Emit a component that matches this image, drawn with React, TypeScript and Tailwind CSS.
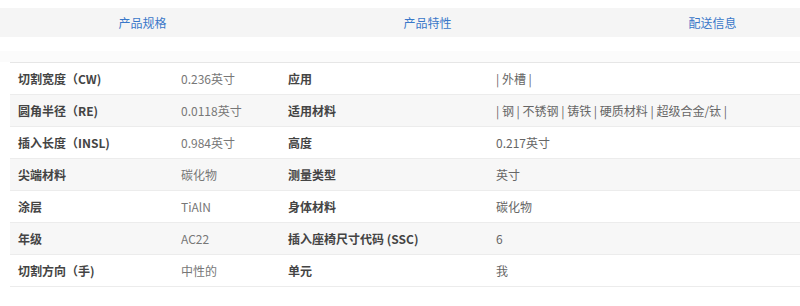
const tabs = ['产品规格', '产品特性', '配送信息'];

const rows: [string, string, string, string][] = [
  ['切割宽度（CW)', '0.236英寸', '应用', '| 外槽 |'],
  ['圆角半径（RE)', '0.0118英寸', '适用材料', '| 钢 | 不锈钢 | 铸铁 | 硬质材料 | 超级合金/钛 |'],
  ['插入长度（INSL)', '0.984英寸', '高度', '0.217英寸'],
  ['尖端材料', '碳化物', '测量类型', '英寸'],
  ['涂层', 'TiAlN', '身体材料', '碳化物'],
  ['年级', 'AC22', '插入座椅尺寸代码 (SSC)', '6'],
  ['切割方向（手)', '中性的', '单元', '我'],
];

export default function App() {
  return (
    <div
      className="w-[800px] h-[306px] overflow-hidden bg-white text-[12px]"
      style={{ fontFamily: '"Noto Sans CJK SC", "Open Sans", sans-serif' }}
    >
      <div className="pt-2">
        <div className="flex h-[29px] bg-[#f5f5f5] overflow-hidden">
          {tabs.map((t) => (
            <div
              key={t}
              className="w-[285px] shrink-0 flex items-center justify-center text-[#3a78c9]"
            >
              {t}
            </div>
          ))}
        </div>
      </div>

      <div className="h-[14px]" />
      <div className="h-[11px] bg-[#fbfbfb]" />

      <div className="ml-[10px] border-t border-[#e6e6e6]">
        {rows.map((r, i) => (
          <div
            key={r[0]}
            className={`grid grid-cols-[163px_107px_208px_1fr] h-[32px] items-center border-b border-[#ececec] ${
              i % 2 === 1 ? 'bg-[#f7f7f7]' : 'bg-white'
            }`}
          >
            <div className="pl-2 font-bold text-[#444]">{r[0]}</div>
            <div className="pl-2 text-[#777]">{r[1]}</div>
            <div className="pl-2 font-bold text-[#444]">{r[2]}</div>
            <div className="pl-2 text-[#666]">{r[3]}</div>
          </div>
        ))}
      </div>
    </div>
  );
}
